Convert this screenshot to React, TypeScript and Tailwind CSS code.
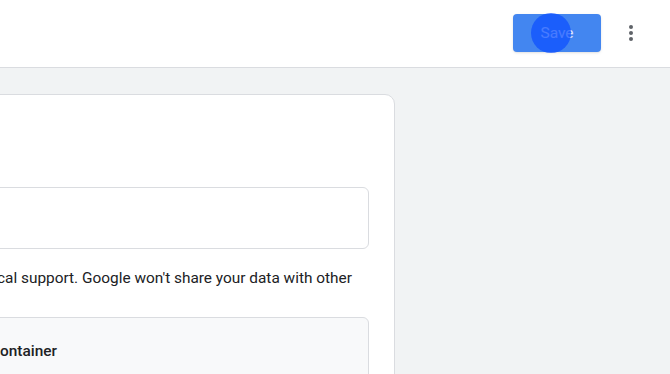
import React from "react";

export default function App() {
  return (
    <div className="w-[670px] h-[374px] overflow-hidden bg-[#f1f3f4] flex flex-col" style={{ fontFamily: "Roboto, 'Noto Sans', sans-serif" }}>
      <header className="h-[68px] shrink-0 bg-white border-b border-[#dadce0] flex items-center justify-end pr-[37px]">
        <div className="relative mt-[-1px]">
          <button className="w-[88px] h-[38px] rounded-[4px] bg-[#4386f0] text-[15.5px] text-white/80 shadow-sm flex items-center justify-center pt-[2px]">
            Save
          </button>
          <span className="absolute left-[18px] top-[-1px] w-[40px] h-[40px] rounded-full bg-[#0a4dff]/70 pointer-events-none" />
        </div>
        <div className="ml-[28px] flex flex-col gap-[2px] items-center mt-[-2px]">
          <span className="w-[4px] h-[4px] rounded-full bg-[#5f6368]" />
          <span className="w-[4px] h-[4px] rounded-full bg-[#5f6368]" />
          <span className="w-[4px] h-[4px] rounded-full bg-[#5f6368]" />
        </div>
      </header>
      <div className="flex-1 pt-[26px]">
        <div className="ml-[-20px] w-[415px] h-[400px] bg-white border border-[#dadce0] rounded-[10px] pt-[92px] pr-[25px]">
          <div className="h-[62px] border border-[#dadce0] rounded-[6px]" />
          <p className="mt-[19px] text-[15.4px] leading-[20px] text-[#202124] ml-[16px] whitespace-nowrap">
            cal support. Google won't share your data with other
          </p>
          <div className="mt-[29px] h-[80px] bg-[#f8f9fa] border border-[#dadce0] rounded-[6px] pt-[21px] pl-[18px]">
            <span className="text-[15.4px] font-medium text-[#202124]">ontainer</span>
          </div>
        </div>
      </div>
    </div>
  );
}
